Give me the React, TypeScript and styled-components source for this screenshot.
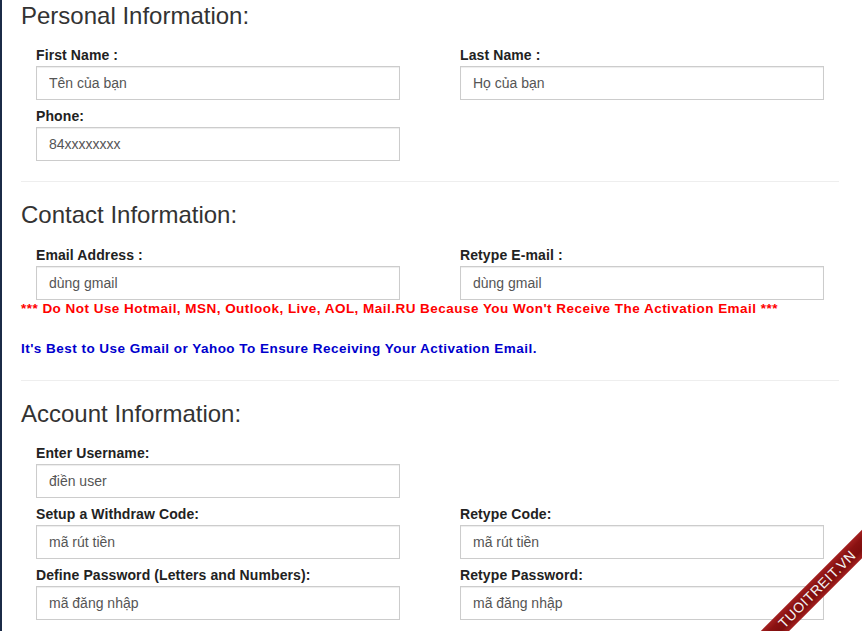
import React from "react";
import styled, { createGlobalStyle } from "styled-components";

const GlobalStyle = createGlobalStyle`
  html, body {
    margin: 0;
    padding: 0;
    background: #ffffff;
    overflow: hidden;
  }
  body {
    font-family: "Liberation Sans", Arial, Helvetica, sans-serif;
    color: #333333;
  }
  * {
    box-sizing: border-box;
  }
`;

const Page = styled("div")`
  position: relative;
  height: 631px;
  border-left: 2px solid #1b2b47;
  padding: 3px 23px 0 19px;
  overflow: hidden;
`;

const Heading = styled("h3")`
  margin: 0 0 16px;
  font-size: 24px;
  font-weight: 400;
  line-height: 1.1;
  color: #333333;
`;

const Divider = styled("hr")`
  margin: 20px 0 20px;
  border: 0;
  border-top: 1px solid #eeeeee;
`;

const FieldGrid = styled("div")`
  display: grid;
  grid-template-columns: 364px 364px;
  column-gap: 60px;
  row-gap: 6px;
  padding-left: 15px;
`;

const Field = styled("div")<{ $col?: number }>`
  display: flex;
  flex-direction: column;
  grid-column: ${(p) => p.$col ?? "auto"};
`;

const Label = styled("label")`
  display: block;
  margin-bottom: 1px;
  font-size: 14px;
  font-weight: 700;
  line-height: 20px;
  letter-spacing: 0.1px;
  color: #222222;
`;

const Input = styled("input")`
  display: block;
  width: 100%;
  height: 34px;
  padding: 6px 12px;
  font-family: inherit;
  font-size: 14px;
  line-height: 20px;
  color: #555555;
  background: #ffffff;
  border: 1px solid #cccccc;
  border-radius: 0;
  box-shadow: inset 0 1px 1px rgba(0, 0, 0, 0.075);
  outline: none;

  &::placeholder {
    color: #555555;
    opacity: 1;
  }
`;

const Notice = styled("p")<{ $tone: "warn" | "info" }>`
  margin: 0;
  font-size: 13.5px;
  font-weight: 700;
  line-height: 18.5px;
  letter-spacing: 0.47px;
  white-space: nowrap;
  color: ${(p) => (p.$tone === "warn" ? "#ff0000" : "#0000cd")};
  & + & {
    margin-top: 22px;
    padding-bottom: 1px;
  }
`;

const Corner = styled("div")`
  position: absolute;
  right: 0;
  bottom: 0;
  width: 150px;
  height: 150px;
  overflow: hidden;
  pointer-events: none;
`;

const Ribbon = styled("div")`
  position: absolute;
  left: -45px;
  top: 98px;
  width: 300px;
  height: 20px;
  background: linear-gradient(#a32020, #8a1111 30%, #7e0d0d 70%, #a32020);
  transform: rotate(-45deg);
  display: flex;
  align-items: center;
  justify-content: center;
  font-family: "Liberation Sans", Arial, sans-serif;
  font-size: 14px;
  letter-spacing: 0.6px;
  color: #f2f2f2;
  line-height: 1;
`;

type FieldDef = { label: string; placeholder: string; col?: number };

const personal: FieldDef[] = [
  { label: "First Name :", placeholder: "Tên của bạn" },
  { label: "Last Name :", placeholder: "Họ của bạn" },
  { label: "Phone:", placeholder: "84xxxxxxxx", col: 1 },
];

const contact: FieldDef[] = [
  { label: "Email Address :", placeholder: "dùng gmail" },
  { label: "Retype E-mail :", placeholder: "dùng gmail" },
];

const account: FieldDef[] = [
  { label: "Enter Username:", placeholder: "điền user", col: 1 },
  { label: "Setup a Withdraw Code:", placeholder: "mã rút tiền", col: 1 },
  { label: "Retype Code:", placeholder: "mã rút tiền" },
  { label: "Define Password (Letters and Numbers):", placeholder: "mã đăng nhập", col: 1 },
  { label: "Retype Password:", placeholder: "mã đăng nhập" },
];

const Fields = ({ items }: { items: FieldDef[] }) => (
  <FieldGrid>
    {items.map((f, i) => (
      <Field key={i} $col={f.col}>
        <Label>{f.label}</Label>
        <Input type="text" placeholder={f.placeholder} />
      </Field>
    ))}
  </FieldGrid>
);

export const App = () => {
  return (
    <>
      <GlobalStyle />
      <Page>
        <Heading>Personal Information:</Heading>
        <Fields items={personal} />
        <Divider />

        <Heading>Contact Information:</Heading>
        <Fields items={contact} />
        <Notice $tone="warn">
          *** Do Not Use Hotmail, MSN, Outlook, Live, AOL, Mail.RU Because You Won't Receive The
          Activation Email ***
        </Notice>
        <Notice $tone="info">
          It's Best to Use Gmail or Yahoo To Ensure Receiving Your Activation Email.
        </Notice>
        <Divider />

        <Heading>Account Information:</Heading>
        <Fields items={account} />

        <Corner>
          <Ribbon>TUOITREIT.VN</Ribbon>
        </Corner>
      </Page>
    </>
  );
};

export default App;
